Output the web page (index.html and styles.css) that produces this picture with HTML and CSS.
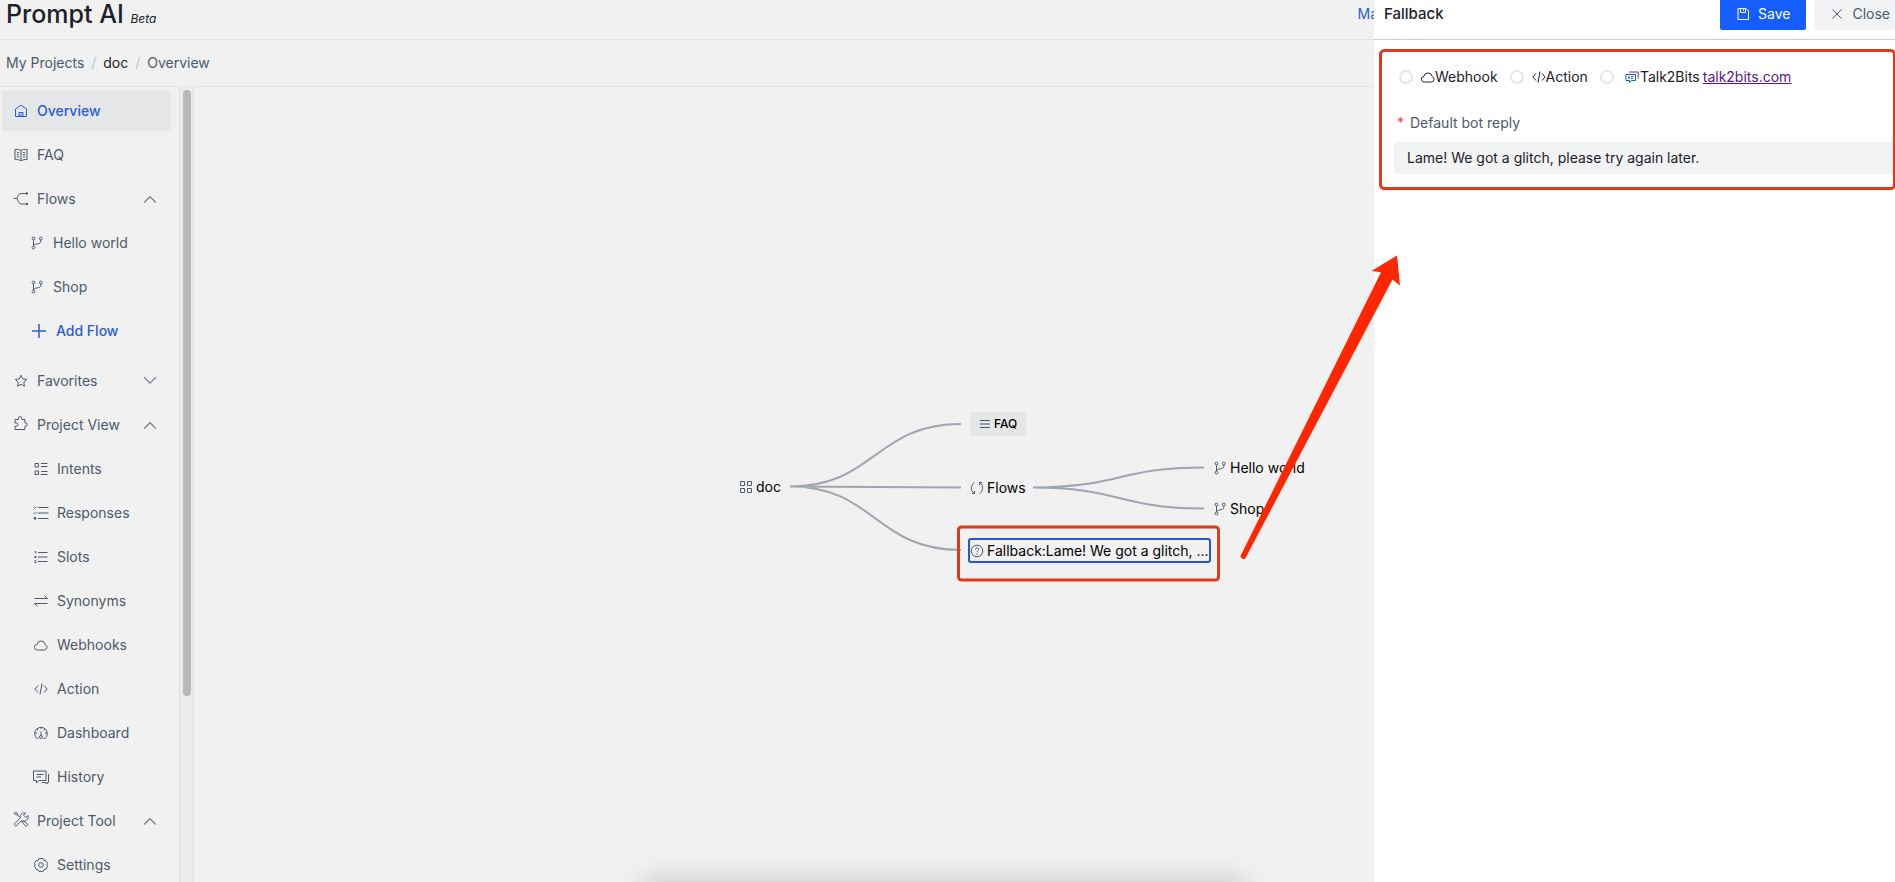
FILE: index.html
```html
<!DOCTYPE html>
<html lang="en">
<head>
<meta charset="utf-8">
<title>Prompt AI</title>
<link rel="stylesheet" href="styles.css">
</head>
<body>
<svg class="defs" aria-hidden="true">
  <symbol id="branch" viewBox="0 0 14 14"><circle cx="3.5" cy="2.5" r="1.4"/><circle cx="3.5" cy="11.5" r="1.4"/><circle cx="10.8" cy="2.5" r="1.4"/><path d="M3.5 4v6M10.8 4v1.2c0 1.5-1 2-2.300 2.300L5.500 8.300c-1.200.3-2 .8-2 1.800"/></symbol>
  <symbol id="up" viewBox="0 0 14 14"><path d="M1.200 10.500 7 4.700l5.800 5.800"/></symbol>
  <symbol id="down" viewBox="0 0 14 14"><path d="M1.200 3.300 7 9.100 12.800 3.300"/></symbol>
  <symbol id="cloud" viewBox="0 0 14 14"><path d="M3.600 12h6.800a2.800 2.800 0 0 0 .8-5.400 4.200 4.200 0 0 0-8.300-.2 2.800 2.800 0 0 0 .7 5.600z"/></symbol>
  <symbol id="code" viewBox="0 0 14 14"><path d="M4 3.500.9 7 4 10.500M10 3.500 13.100 7 10 10.500M8 1.500l-2 11"/></symbol>
</svg>
<div class="app">
  <header class="topbar">
    <h1 class="brand">Prompt AI <em class="beta">Beta</em></h1>
    <a class="top-link" href="#">Ma</a>
  </header>
  <nav class="crumbs" aria-label="Breadcrumb">
    <a href="#">My Projects</a><span class="slash">/</span><a class="current" href="#">doc</a><span class="slash">/</span><a href="#">Overview</a>
  </nav>
  <div class="body">
    <nav class="sidebar" aria-label="Project">
      <a class="item active" href="#"><svg class="icon" viewBox="0 0 14 14"><path d="M1.500 12.500V5L7 1.200 12.500 5v7.500zM5 12.500v-4h4v4M7 9.500v3"/></svg>Overview</a>
      <a class="item" href="#"><svg class="icon" viewBox="0 0 14 14"><path d="M1 1.500c2.500-.3 4.500 0 6 1 1.500-1 3.500-1.300 6-1v10c-2.500 0-4.500.3-6 1.300-1.500-1-3.500-1.300-6-1.300zM7 2.500V12.500M2.800 4.300l2.300.4M2.800 6.500l2.300.4M2.800 8.700l2.300.4M11.200 4.300l-2.300.4M11.200 6.500l-2.300.4M11.200 8.700l-2.300.4"/></svg>FAQ</a>
      <button class="item"><svg class="icon wide" viewBox="0 0 16 14"><path d="M.5 6.500H4M14 1.500H8.500C6 1.500 5.500 3 4 6.500c1.500 3.500 2 5.500 4.500 5.500H14"/><path class="solid" d="m13.500.5 1.500 1-1.500 1zM13.500 11l1.500 1-1.500 1z"/></svg>Flows<svg class="chev"><use href="#up"/></svg></button>
      <a class="item child" href="#"><svg class="icon"><use href="#branch"/></svg>Hello world</a>
      <a class="item child" href="#"><svg class="icon"><use href="#branch"/></svg>Shop</a>
      <button class="item child add"><svg class="icon plus" viewBox="0 0 14 14"><path d="M7 0v14M0 7h14"/></svg>Add Flow</button>
      <button class="item"><svg class="icon" viewBox="0 0 14 14"><path d="m7 1.200 1.700 3.700 4 .5-2.900 2.800.7 4L7 10.300l-3.500 1.900.7-4L1.300 5.400l4-.5z"/></svg>Favorites<svg class="chev"><use href="#down"/></svg></button>
      <button class="item"><svg class="icon raised" viewBox="0 0 14 16"><path d="M1 4.500h3.500V3.300a1.700 1.700 0 0 1 3.400 0v1.200h3V8h.8a1.600 1.600 0 0 1 0 3.200h-.8v3.300H1v-3.300h1.200a1.600 1.600 0 0 0 0-3.200H1z"/></svg>Project View<svg class="chev"><use href="#up"/></svg></button>
      <a class="item leaf" href="#"><svg class="icon" viewBox="0 0 14 14"><path d="M1 1.500h3.500V5H1zM1 9h3.500v3.500H1zM7 1.500h6.500M7 4.500h6.500M7 9.500h6.500M7 12.500h6.500"/></svg>Intents</a>
      <a class="item leaf" href="#"><svg class="icon wide" viewBox="0 0 16 14"><path d="M5 1.500h10.500M5 7h10.500M5 12.500h10.500M.5 1.500l1 1L3.500.5M.5 7l1 1 2-2"/><circle class="solid" cx="2" cy="12.300" r="1"/></svg>Responses</a>
      <a class="item leaf" href="#"><svg class="icon" viewBox="0 0 14 14"><path d="M4 2.500h9.500M4 7h9.500M4 11.500h9.500M.8 1.500h1v2M.5 6.500h1.500v1H.5M.5 10.800h1.500v1.700H.5"/></svg>Slots</a>
      <a class="item leaf" href="#"><svg class="icon" viewBox="0 0 14 14"><path d="M.5 4.500h13L10.500 1.500M13.500 9.500H.5l3 3"/></svg>Synonyms</a>
      <a class="item leaf" href="#"><svg class="icon"><use href="#cloud"/></svg>Webhooks</a>
      <a class="item leaf" href="#"><svg class="icon"><use href="#code"/></svg>Action</a>
      <a class="item leaf" href="#"><svg class="icon" viewBox="0 0 14 14"><path d="M4.500 12.500H3a6.300 6.300 0 1 1 8 0H9.500M7 5.500v4M7 1v2M1 7h2M11 7h2M3 3l1.200 1.200M11 3 9.800 4.200"/><circle cx="7" cy="11" r="1.500"/></svg>Dashboard</a>
      <a class="item leaf" href="#"><svg class="icon wide" viewBox="0 0 16 14"><path d="M.5 1h12.500v9.500H6L3.500 13v-2.500h-3zM3.500 4.500h7M3.500 7h4.500M15.500 4v8.500H14V14l-2-1.500H9"/></svg>History</a>
      <button class="item"><svg class="icon wide raised" viewBox="0 0 16 16"><path d="M1 2.500 2.500 1l2 1.300v1.500L7 6.300M9.500 9l4.800 3.800c1.200 1.300-.7 3-2 2L8.500 10.500M4.500 3.800H3L1 2.500M6 8.500l-4.300 4c-1 1.500.8 3.200 2.100 2L8 10c2 .5 4 .5 5.500-.8 1.500-1.400 2-3.200 1.500-4.700l-2.200 2-2.300-2.300 2-2.200c-3-.8-6 1.500-5 4.700z"/></svg>Project Tool<svg class="chev"><use href="#up"/></svg></button>
      <a class="item leaf" href="#"><svg class="icon" viewBox="0 0 14 14"><path d="M4.800.6h4.400l.8 1.900 2 .2 1.600 3-.9 1.300.9 1.300-1.600 3-2 .2-.8 1.900H4.800L4 11.500l-2-.2-1.600-3L1.300 7l-.9-1.300 1.600-3 2-.2z"/><circle cx="7" cy="7" r="2.300"/></svg>Settings</a>
    </nav>
    <div class="track"><div class="thumb"></div></div>
    <main class="canvas">
      <svg class="edges" aria-hidden="true"><path d="M596 399.500C681 399.500 681 337 767 337M596 399.500C681 399.500 681 400.500 767 400.500M596 399.500C681 399.500 681 463 767 463M839 400.500C925 400.500 925 380.500 1010 380.500M839 400.500C925 400.500 925 421.500 1010 421.500"/></svg>
      <div class="node n-doc"><svg class="icon" viewBox="0 0 14 14"><path d="M1.500 1.500h4v4h-4zM8.500 1.500h4v4h-4zM1.500 8.500h4v4h-4zM8.500 8.500h4v4h-4z"/></svg>doc</div>
      <div class="node n-faq"><svg class="icon" viewBox="0 0 12 12"><path d="M1 2.500h10M1 6h10M1 9.500h10"/></svg>FAQ</div>
      <div class="node n-flows"><svg class="icon" viewBox="0 0 14 14"><path d="M4.500 1.800C.5 3.500.5 10 4 12.200M2 12.500h2.500V10M9.500 12.200c4-1.700 4-8.200.5-10.400M12 1.500H9.500V4"/></svg>Flows</div>
      <div class="node n-hello"><svg class="icon"><use href="#branch"/></svg>Hello world</div>
      <div class="node n-shop"><svg class="icon"><use href="#branch"/></svg>Shop</div>
      <div class="node n-fallback"><svg class="icon" viewBox="0 0 14 14"><circle cx="7" cy="7" r="5.800"/><path d="M5.400 5.600c0-2.200 3.300-2.100 3.200-.1C8.600 6.700 7 6.700 7 8.200M7 9.300v1.200"/></svg>Fallback:Lame! We got a glitch, ...</div>
      <div class="dock"></div>
    </main>
  </div>
</div>
<aside class="drawer">
  <header class="drawer-head">
    <h2>Fallback</h2>
    <button class="btn primary"><svg class="icon" viewBox="0 0 14 14"><path d="M2 1.500h8L12.500 4v8.500H2zM4.500 1.500v4h5v-4M7.500 2.500v1.500"/></svg>Save</button>
    <button class="btn"><svg class="icon" viewBox="0 0 14 14"><path d="m2.500 2.500 9 9M11.500 2.500l-9 9"/></svg>Close</button>
  </header>
  <form class="drawer-body">
    <div class="choices">
      <label class="choice"><input type="radio" name="kind"><svg class="icon"><use href="#cloud"/></svg>Webhook</label>
      <label class="choice"><input type="radio" name="kind"><svg class="icon"><use href="#code"/></svg>Action</label>
      <label class="choice"><input type="radio" name="kind"><svg class="icon talk" viewBox="0 0 14 14"><path class="back" d="M4 2h9.200v6.500"/><path d="M1 4.500h9.500v6H6.500L4.500 12.500v-2H1zM3.800 6v3M3.800 7.500h1M6 6.500h2.500M6 8.500h2"/></svg>Talk2Bits</label>
      <a class="visited" href="#">talk2bits.com</a>
    </div>
    <label class="field-label" for="reply"><span class="req">*</span>Default bot reply</label>
    <input class="field" id="reply" type="text" value="Lame! We got a glitch, please try again later.">
  </form>
</aside>
<svg class="marks" aria-hidden="true">
  <rect x="958.500" y="527" width="260" height="53" rx="3"/>
  <rect x="1380.500" y="50.500" width="514" height="138" rx="4"/>
  <path d="M1397 255.500 1371.500 271l9.500 1.200L1240.500 556q0 3.500 4.500 3L1392.500 279.500l7.500 6z"/>
</svg>
</body>
</html>
```
FILE: styles.css
```css
* { box-sizing: border-box; }
body {
  margin: 0;
  height: 100vh;
  overflow: hidden;
  background: #f1f1f1;
  color: #1d2129;
  font: 14px/22px Inter, "Liberation Sans", sans-serif;
}
a { color: inherit; text-decoration: none; }
button { border: 0; background: none; color: inherit; font: inherit; }
svg { fill: none; stroke: currentColor; }
.solid { fill: currentColor; }
.defs { position: absolute; width: 0; height: 0; }
.icon { flex: none; width: 14px; height: 14px; }

.app { display: flex; flex-direction: column; height: 100%; }
.topbar {
  display: flex;
  flex: none;
  justify-content: space-between;
  height: 40px;
  padding: 0 517px 0 6px;
  border-bottom: 1px solid #e4e5e7;
}
.brand { margin: 0; font-size: 25px; line-height: 28px; font-weight: 500; }
.beta { font-size: 12px; font-weight: 400; }
.top-link { color: #2a5bd7; line-height: 28px; }
.crumbs {
  display: flex;
  flex: none;
  align-items: center;
  height: 47px;
  padding: 0 6px;
  border-bottom: 1px solid #e4e5e7;
  color: #4e5969;
}
.slash { width: 19px; text-align: center; color: #c2c6cc; }
.current { color: #1d2129; }

.body { display: flex; flex: 1; min-height: 0; }
.sidebar {
  display: flex;
  flex: none;
  flex-direction: column;
  gap: 4px;
  width: 179px;
  padding: 4px 8px 0 2px;
  overflow: hidden;
  color: #4e5969;
}
.item {
  display: flex;
  flex: none;
  align-items: center;
  gap: 9px;
  height: 40px;
  padding: 0 14px 0 12px;
  border-radius: 2px;
  text-align: left;
}
.item .wide { width: 16px; margin: 0 -1px; }
.item .raised { height: 16px; margin-bottom: 4px; }
.active { background: #e5e6e8; color: #2a5bd7; font-weight: 500; }
.child { padding-left: 28px; }
.leaf { padding-left: 32px; }
.add { margin-bottom: 6px; gap: 10px; padding-left: 30px; color: #2a5bd7; font-weight: 500; }
.chev { width: 14px; height: 14px; margin-left: auto; color: #7c838f; stroke-width: 1.300; }
.plus { stroke-width: 1.500; }
.track {
  flex: none;
  width: 15px;
  padding: 3px 2px 0 3px;
  border: solid #dcdddf;
  border-width: 0 1px;
  background: #ebebeb;
}
.thumb { width: 8px; height: 76.500%; border-radius: 4px; background: #b8b8b8; }

.canvas { position: relative; flex: 1; overflow: hidden; }
.edges { position: absolute; inset: 0; width: 100%; height: 100%; stroke: #a0a5ae; stroke-width: 2; }
.node {
  position: absolute;
  display: flex;
  align-items: center;
  gap: 3px;
  height: 24px;
  color: #000;
  white-space: nowrap;
}
.node .icon { color: #4e5969; }
.n-doc { left: 545px; top: 388px; }
.n-faq { left: 776px; top: 325px; padding: 0 9px; border-radius: 2px; background: #e5e6e8; font-size: 12px; font-weight: 500; }
.n-faq .icon { width: 12px; height: 12px; }
.n-flows { left: 776px; top: 389px; }
.n-hello { left: 1019px; top: 369px; }
.n-shop { left: 1019px; top: 410px; }
.n-fallback { left: 774px; top: 451px; height: 25px; border: 2px solid #2a56c6; border-radius: 3px; }
.dock {
  position: absolute;
  top: 100%;
  left: 450px;
  width: 600px;
  height: 40px;
  box-shadow: 0 0 30px rgba(0, 0, 0, .2);
}

.drawer { position: fixed; top: 0; right: 0; bottom: 0; width: 521px; overflow: hidden; background: #fff; }
.drawer-head {
  display: flex;
  align-items: flex-start;
  gap: 8px;
  height: 40px;
  padding-left: 10px;
  border-bottom: 1px solid #c9cdd4;
}
.drawer-head h2 { flex: 1; margin: 0; font-size: 15px; line-height: 27px; font-weight: 500; }
.btn {
  display: flex;
  flex: none;
  align-items: center;
  gap: 8px;
  height: 30px;
  padding: 0 16px 2px;
  border-radius: 0 0 2px 2px;
  background: #f2f3f5;
  color: #4e5969;
}
.btn.primary { background: #165dff; color: #fff; }
.btn:last-child { padding-right: 5px; }
.drawer-body { padding: 26px 0 0 20px; }
.choices { display: flex; align-items: center; }
.choice { display: flex; align-items: center; margin-right: 7px; }
.choice input {
  appearance: none;
  width: 14px;
  height: 14px;
  margin: 0 8px 0 5px;
  border: 2px solid #e5e6eb;
  border-radius: 50%;
  background: #fff;
}
.choice .talk { margin: 0 1px 0 3px; color: #165dcf; }
.talk .back { stroke: #6b2f96; }
.choice:nth-child(3) { margin-right: 3px; }
.visited { color: #551a8b; text-decoration: underline; }
.field-label { display: flex; gap: 6px; margin: 24px 0 8px 3px; color: #4e5969; }
.req { color: #f53f3f; }
.field {
  display: block;
  width: 100%;
  height: 32px;
  padding: 0 13px 2px;
  border: 0;
  border-radius: 2px;
  background: #f2f3f5;
  color: #1d2129;
  font: inherit;
}

.marks { position: fixed; inset: 0; width: 100%; height: 100%; pointer-events: none; stroke: none; }
.marks rect { stroke: #e03a1c; stroke-width: 3; }
.marks path { fill: #ff2600; }
```
